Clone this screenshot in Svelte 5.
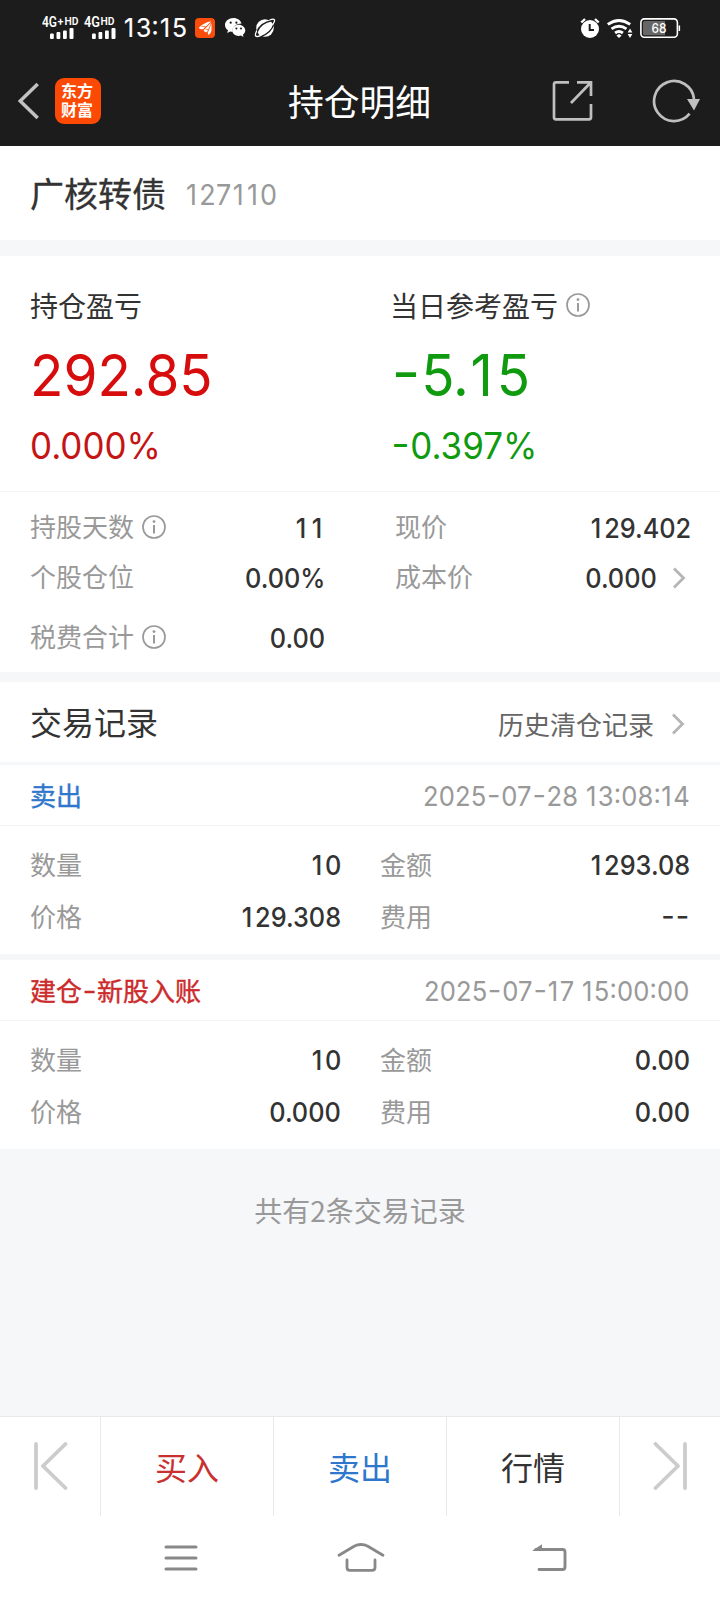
<script>
  const trades = [
    {
      kind: 'sell', title: ['卖出'], time: '2025-07-28 13:08:14',
      cells: [['数量', '10'], ['金额', '1293.08'], ['价格', '129.308'], ['费用', '--']]
    },
    {
      kind: 'open', title: ['建仓', '-', '新股入账'], time: '2025-07-17 15:00:00',
      cells: [['数量', '10'], ['金额', '0.00'], ['价格', '0.000'], ['费用', '0.00']]
    }
  ];
  const details = [
    { label: '持股天数', value: '11', info: true },
    { label: '现价', value: '129.402' },
    { label: '个股仓位', value: '0.00%' },
    { label: '成本价', value: '0.000', arrow: true },
    { label: '税费合计', value: '0.00', info: true }
  ];
  // Splits a figure so that "1" and "-" can take their own advance width.
  const pieces = (text) => text.split(/([1-])/).filter((p) => p !== '');
</script>

{#snippet num(text, cls)}
  <span class="num {cls}">{#each pieces(text) as p}{#if p === '1'}<i class="one">1</i>{:else if p === '-'}<i class="dash">-</i>{:else}{p}{/if}{/each}</span>
{/snippet}

{#snippet info()}
  <svg class="info" width="24" height="24" viewBox="0 0 24 24">
    <circle cx="12" cy="12" r="11" fill="none" stroke="#999" stroke-width="1.7" />
    <path d="M12 10V18.6" stroke="#999" stroke-width="2" />
    <circle cx="12" cy="6.6" r="1.4" fill="#999" />
  </svg>
{/snippet}

{#snippet chevron()}
  <svg class="chevron" width="14" height="24" viewBox="0 0 14 24">
    <path d="M2 2.500 11.500 12 2 21.500" fill="none" stroke="#b5b5b5" stroke-width="2.800" />
  </svg>
{/snippet}

<div class="page">
  <header>
    <div class="status">
      <svg width="76" height="32" viewBox="0 -4 76 32" fill="#fff">
        <g font-family="Roboto, sans-serif" font-weight="600">
          <text x="0" y="11.300" font-size="14" textLength="15" lengthAdjust="spacingAndGlyphs">4G</text>
          <text x="15.500" y="9" font-size="10" textLength="6" lengthAdjust="spacingAndGlyphs">+</text>
          <text x="22.500" y="8.600" font-size="10.500" textLength="14" lengthAdjust="spacingAndGlyphs">HD</text>
          <text x="42" y="11.300" font-size="14" textLength="16" lengthAdjust="spacingAndGlyphs">4G</text>
          <text x="58.500" y="8.600" font-size="10.500" textLength="14" lengthAdjust="spacingAndGlyphs">HD</text>
        </g>
        {#each [8, 50] as x}
          <rect {x} y="17.500" width="3.800" height="5.500" rx="1" />
          <rect x={x + 6.5} y="16" width="3.800" height="7" rx="1" />
          <rect x={x + 13} y="14.500" width="3.800" height="8.500" rx="1" />
          <rect x={x + 19.5} y="12" width="4" height="11" rx="1" />
        {/each}
      </svg>
      {@render num('13:15', 'clock')}
      <svg class="notices" width="82" height="22" viewBox="0 0 82 22">
        <rect x="0" y="1" width="20" height="20" rx="4" fill="#fa4d0c" />
        <path d="M3.800 10.800Q9 5.500 16.300 4.300L8 12.200Q5 12.800 3.800 10.800ZM8.600 13.200 16.400 5.200 12 15.200Q9.600 15.800 8.600 13.200ZM12.800 15.800 16.500 6.500V13.500Q15.500 17.600 13 17.800Z" fill="#fff" />
        <path d="M6.500 9.300 11 9.800M10.500 12 13.800 12.800" stroke="#fa4d0c" stroke-width=".7" />
        <path d="M38.500 1C33.800 1 30 4 30 8c0 2.200 1.100 4.100 3 5.300L32.200 16l3-1.500 2.400.5C36.700 10.600 40 7 46.600 6.600 45.600 3.200 42.400 1 38.500 1Z" fill="#fff" />
        <path d="M43.700 7.700c-3.600 0-6.500 2.500-6.500 5.600s2.900 5.600 6.500 5.600c.8 0 1.600-.1 2.300-.4l2.500 1.500-.6-2.300c1.500-1 2.400-2.600 2.400-4.400 0-3.100-3-5.600-6.600-5.600Z" fill="#fff" />
        <g fill="#1c1c1c">
          <circle cx="35.700" cy="5.700" r="1.100" /><circle cx="41.400" cy="5.700" r="1.100" />
          <circle cx="41.400" cy="11.400" r="1" /><circle cx="46" cy="11.400" r="1" />
        </g>
        <circle cx="70" cy="11" r="8.800" fill="#fff" />
        <path d="M61.800 15.500Q65 5.800 77.500 3.600" stroke="#1c1c1c" stroke-width="1.500" fill="none" />
        <path d="M66 19.600Q76.500 15.500 78.800 7" stroke="#1c1c1c" stroke-width="1.200" fill="none" />
        <path d="M61.600 14Q59 19.500 62 19.600 63.500 19.600 65.800 18.400M74.800 3Q79.200 1.200 79.600 3.200 79.600 5 77.800 7.500" stroke="#fff" stroke-width="1.300" fill="none" stroke-linecap="round" />
      </svg>
      <span class="grow"></span>
      <svg width="103" height="24" viewBox="0 0 103 24">
        <circle cx="10" cy="13" r="9" fill="#fff" />
        <path d="M1.300 6.500 5 3M18.700 6.500 15 3" stroke="#fff" stroke-width="2.400" />
        <path d="M9.700 8V14H14" stroke="#1c1c1c" stroke-width="2" fill="none" />
        <g fill="none" stroke="#fff" stroke-width="2.900">
          <path d="M27.800 8.400Q39 .400 50.200 8.400" />
          <path d="M31.500 12.900Q39 7.500 46.500 12.900" />
          <path d="M35.100 17Q39 14.200 42.900 17" />
        </g>
        <path d="M36.400 19.400 39 18 41.600 19.400 39 22Z" fill="#fff" />
        <path d="M50 12.500 52.400 16.400H47.600ZM50 22 52.400 18.100H47.600Z" fill="#fff" />
        <rect x="60.900" y="2.900" width="36.500" height="18.400" rx="3.500" fill="none" stroke="#fff" stroke-width="1.600" />
        <path d="M64.500 5H85V19.200H64.500Q63 19.200 63 17.700V6.500Q63 5 64.500 5Z" fill="#666" />
        <rect x="98.600" y="9.500" width="1.500" height="5.500" fill="#fff" />
        <text x="71.500" y="16.800" font-family="Inter, sans-serif" font-weight="500" font-size="13.500" textLength="15" lengthAdjust="spacingAndGlyphs" fill="#fff">68</text>
      </svg>
    </div>
    <div class="navbar">
      <div class="side">
        <svg width="22" height="38" viewBox="0 0 22 38">
          <path d="M19.700 2 2.200 19 19.700 36" fill="none" stroke="#c2c2c2" stroke-width="3.500" />
        </svg>
        <div class="logo"><span>东方财富</span></div>
      </div>
      <h1>持仓明细</h1>
      <div class="side right">
        <svg class="share" width="41" height="41" viewBox="0 0 41 41" fill="none" stroke="#bfbfbf" stroke-width="2.700">
          <path d="M17 2.300H4Q2 2.300 2 4.300V37.300Q2 39.300 4 39.300H37Q39 39.300 39 37.300V24" />
          <path d="M25 2.300H39V16M19 23 38.300 3" />
        </svg>
        <svg width="50" height="44" viewBox="0 0 50 44">
          <path d="M43 20A20 20 0 1 0 38.600 34.700" fill="none" stroke="#bfbfbf" stroke-width="2.700" />
          <path d="M36 20H49L43 31.500Z" fill="#bfbfbf" />
        </svg>
      </div>
    </div>
  </header>

  <section class="security">
    <span class="name">广核转债</span>
    {@render num('127110', 'code')}
  </section>

  <section class="summary">
    <div>
      <div class="caption"><span>持仓盈亏</span></div>
      <div class="big up">{@render num('292.85', 'wide')}</div>
      <div class="pct up">{@render num('0.000%', 'wide')}</div>
    </div>
    <div>
      <div class="caption today"><span>当日参考盈亏</span>{@render info()}</div>
      <div class="big down">{@render num('-5.15', 'wide')}</div>
      <div class="pct down">{@render num('-0.397%', 'wide')}</div>
    </div>
  </section>

  <section class="details">
    {#each details as d}
      <div class="row">
        <span class="label">{d.label}</span>
        {#if d.info}{@render info()}{/if}
        <span class="grow"></span>
        {@render num(d.value, 'value')}
        {#if d.arrow}{@render chevron()}{/if}
      </div>
    {/each}
  </section>

  <section class="records">
    <h2>交易记录</h2>
    <span class="history">历史清仓记录</span>
    {@render chevron()}
  </section>

  {#each trades as t}
    <section class="trade">
      <div class="head">
        <span class="kind {t.kind}">{#each t.title as part}{#if part === '-'}<i class="dash">-</i>{:else}{part}{/if}{/each}</span>
        {@render num(t.time, 'time')}
      </div>
      <div class="cells">
        {#each t.cells as [label, value]}
          <div class="row">
            <span class="label">{label}</span>
            {@render num(value, 'value')}
          </div>
        {/each}
      </div>
    </section>
  {/each}

  <div class="total">共有2条交易记录</div>

  <footer>
    <div class="actions">
      <div>
        <svg class="first" width="34" height="48" viewBox="0 0 34 48" fill="none" stroke="#ccc" stroke-width="3.800" stroke-linecap="round" stroke-linejoin="round">
          <path d="M2 2V46M31.500 2 9 24 31.500 46" />
        </svg>
      </div>
      <div class="buy">买入</div>
      <div class="sell">卖出</div>
      <div>行情</div>
      <div>
        <svg width="34" height="48" viewBox="0 0 34 48" fill="none" stroke="#ccc" stroke-width="3.800" stroke-linecap="round" stroke-linejoin="round">
          <path d="M32 2V46M2.500 2 25 24 2.500 46" />
        </svg>
      </div>
    </div>
    <div class="system">
      <svg width="34" height="30" viewBox="0 0 34 30" stroke="#888" stroke-width="3" stroke-linecap="round">
        <path d="M2 4H32M2 15H32M2 26H32" />
      </svg>
      <svg width="48" height="30" viewBox="0 0 48 30" fill="none" stroke="#888" stroke-width="2.800" stroke-linecap="round">
        <path d="M2 12.300 18 2.800Q20 1.500 24 1.500T30 2.800L46 12.300" />
        <path d="M10 17V24.500Q10 27.300 12.800 27.300H35.200Q38 27.300 38 24.500V17" />
      </svg>
      <svg width="36" height="30" viewBox="0 0 36 30">
        <path d="M7 26.500H30.500Q33 26.500 33 24V9Q33 6.500 30.500 6.500H4" fill="none" stroke="#888" stroke-width="2.900" stroke-linecap="round" />
        <path d="M.500 7.500 10 1.200V8H1Z" fill="#888" />
      </svg>
    </div>
  </footer>
</div>

<style>
  :global(body) { margin: 0; background: #fff; }
  .page {
    width: 720px;
    height: 1600px;
    display: flex;
    flex-direction: column;
    background: #f6f7f9;
    font-family: "Noto Sans CJK SC", sans-serif;
    color: #333;
    overflow: hidden;
    box-sizing: border-box;
  }
  .page * { box-sizing: border-box; }
  svg { display: block; flex: none; }
  .grow { flex: 1; }
  h1, h2 { margin: 0; font-weight: 400; }
  .num {
    font-family: Inter, sans-serif;
    font-feature-settings: "case" 1;
    display: block;
    line-height: 1;
    letter-spacing: 0.01em;
    white-space: nowrap;
    transform: scaleX(0.93);
    transform-origin: left center;
  }
  .one, .dash { font-style: normal; display: inline-block; text-align: center; letter-spacing: 0; }
  .one { width: 0.53em; padding-right: 0.04em; }
  .dash { width: 0.58em; font-family: Inter, sans-serif; font-feature-settings: "case" 1; transform: scaleX(1.15); }
  .wide { transform: scaleX(0.945); letter-spacing: 0; }
  .wide .one { width: 0.51em; }
  .wide .dash { width: 0.55em; }

  header { height: 146px; background: #1c1c1c; color: #fff; flex: none; }
  .status { height: 56px; padding: 0 37px 0 42px; display: flex; align-items: center; }
  .clock {
    width: 70px;
    margin-left: 5px;
    font-size: 25.500px;
    -webkit-text-stroke: 0.2px;
    transform: scaleX(0.97);
  }
  .notices { margin-left: 2px; }
  .navbar { height: 90px; display: flex; align-items: center; padding: 0 19px 0 18px; }
  .side { width: 170px; display: flex; align-items: center; }
  .side.right { justify-content: flex-end; gap: 58px; }
  .share { margin-top: -2px; }
  .logo {
    width: 46px;
    height: 46px;
    margin-left: 15px;
    border-radius: 9px;
    background: #fc4a05;
    display: flex;
    align-items: center;
    justify-content: center;
    font-weight: 700;
    font-size: 16px;
    line-height: 19px;
    padding: 0 1px 3px 0;
  }
  .logo span { width: 33px; word-break: break-all; }
  h1 { flex: 1; text-align: center; font-size: 35.800px; line-height: 50px; padding-bottom: 2px; }

  .security { height: 94px; flex: none; background: #fff; display: flex; align-items: center; padding: 3px 30px 0; gap: 19px; }
  .name { font-size: 34px; line-height: 50px; padding-bottom: 3px; -webkit-text-stroke: 0.3px; }
  .code { font-size: 29px; color: #999; }

  .summary {
    margin-top: 16px;
    height: 235px;
    flex: none;
    background: #fff;
    display: grid;
    grid-template-columns: 361px 1fr;
    padding: 30px 0 0 30px;
  }
  .caption { height: 40px; display: flex; align-items: center; gap: 8px; font-size: 28px; line-height: 40px; }
  .caption span { padding-bottom: 3px; }
  .caption.today { margin-left: -1px; }
  .caption .info { margin-top: -2px; }
  .big { height: 97px; display: flex; align-items: center; font-size: 58px; }
  .pct { height: 44px; display: flex; align-items: center; font-size: 37px; }
  .up { color: #d70c0c; }
  .pct.up { color: #c41414; }
  .down { color: #0f9a0f; }

  .details {
    height: 181px;
    flex: none;
    border-top: 1px solid #f3f4f6;
    background: #fff;
    display: grid;
    grid-template-columns: 295px 296px;
    grid-template-rows: 50px 50px 70px;
    column-gap: 70px;
    padding: 11px 0 0 30px;
  }
  .row { display: flex; align-items: center; }
  .row .chevron { margin-left: 15px; margin-right: 5px; }
  .row .info { margin-left: 8px; margin-top: -2px; }
  .label { font-size: 26px; line-height: 36px; color: #999; padding-bottom: 4px; }
  .value { font-size: 27.500px; font-weight: 500; transform: scaleX(0.92); transform-origin: right center; letter-spacing: 0; }
  .details .value { padding-top: 2px; }
  .value .one { width: 0.64em; padding-right: 0; }

  .records {
    margin-top: 10px;
    height: 80px;
    flex: none;
    background: #fff;
    display: flex;
    align-items: center;
    padding: 4px 35px 0 30px;
  }
  h2 { flex: 1; font-size: 32px; line-height: 44px; padding-bottom: 6px; }
  .history { font-size: 26px; line-height: 36px; color: #666; margin-right: 17px; }

  .trade { margin-top: 3px; flex: none; background: #fff; }
  .trade + .trade { margin-top: 6px; }
  .head {
    height: 61px;
    border-bottom: 1px solid #f3f4f6;
    display: flex;
    align-items: center;
    justify-content: space-between;
    padding: 4px 30px 0 30px;
  }
  .kind { font-size: 26px; line-height: 36px; padding-bottom: 4px; -webkit-text-stroke: 0.4px; }
  .kind.sell { color: #2f77cc; }
  .kind.open { color: #cc2b2b; }
  .kind .dash { width: 0.580em; line-height: 1; }
  .time { font-size: 27.500px; color: #999; transform-origin: right center; letter-spacing: 0.005em; }
  .time .one { width: 0.48em; }
  .cells {
    height: 128px;
    display: grid;
    grid-template-columns: 311px 310px;
    grid-template-rows: 52px 52px;
    column-gap: 39px;
    padding: 14px 0 0 30px;
  }
  .cells .row { justify-content: space-between; }

  .total { flex: 1; padding-top: 41px; text-align: center; font-size: 28px; line-height: 40px; color: #999; }

  footer { height: 184px; flex: none; background: #fff; border-top: 1px solid #e9e9ea; }
  .actions { height: 99px; display: grid; grid-template-columns: 101px 173px 173px 173px 100px; font-size: 32px; line-height: 46px; }
  .actions > div { display: flex; align-items: center; justify-content: center; padding-bottom: 1px; border-right: 1px solid #e9e9ea; }
  .actions > div:last-child { border: 0; }
  .actions svg { margin-top: -1px; }
  .actions .first { margin-left: 2px; }
  .buy { color: #c93030; }
  .actions .sell { color: #2f77cc; }
  .system { height: 84px; display: flex; align-items: center; gap: 139px; padding-left: 164px; }
  .system svg:last-child { margin-left: 8px; }
</style>
